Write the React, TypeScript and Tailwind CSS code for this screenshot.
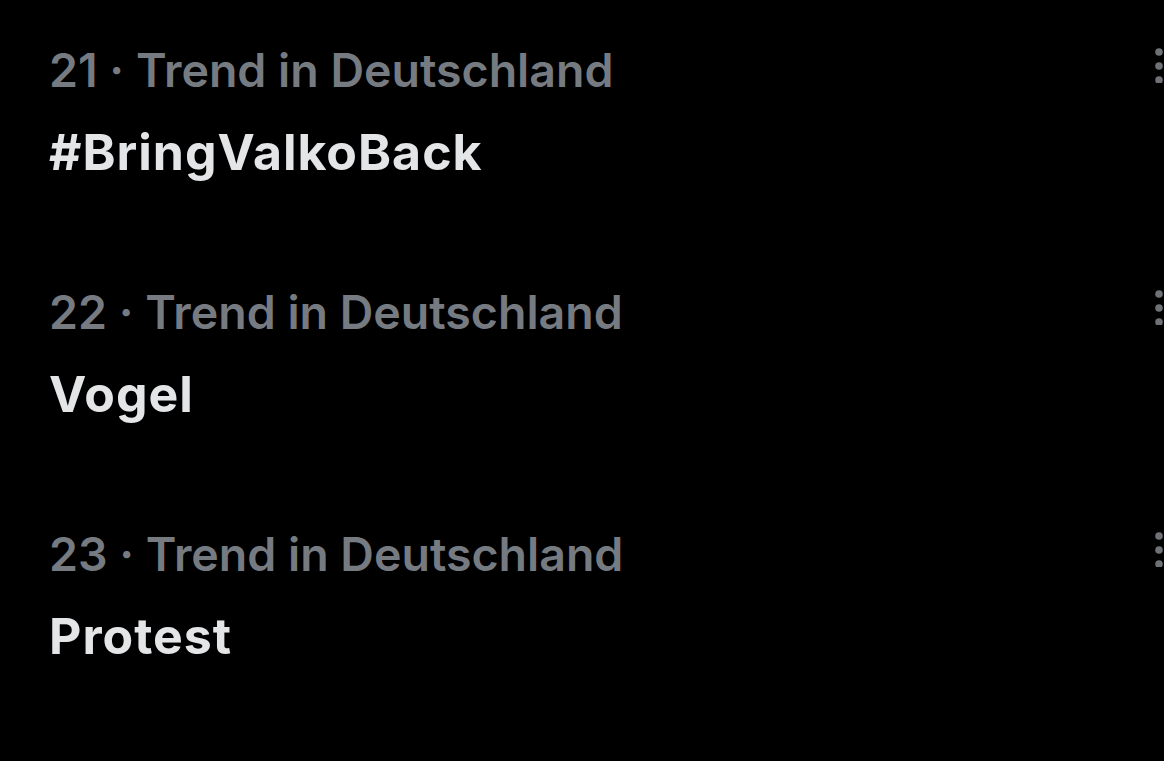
import React from 'react';

type Trend = {
    rank: number;
    place: string;
    topic: string;
};

const trends: Trend[] = [
    { rank: 21, place: 'Deutschland', topic: '#BringValkoBack' },
    { rank: 22, place: 'Deutschland', topic: 'Vogel' },
    { rank: 23, place: 'Deutschland', topic: 'Protest' },
];

const MoreDots = () => (
    <svg width="14" height="36" viewBox="0 0 14 36" className="shrink-0" aria-hidden="true">
        <circle cx="7" cy="5" r="3.8" fill="#6e7276" />
        <circle cx="7" cy="19" r="3.8" fill="#6e7276" />
        <circle cx="7" cy="33" r="3.8" fill="#6e7276" />
    </svg>
);

const TrendRow: React.FC<{ trend: Trend }> = ({ trend }) => (
    <div className="flex h-[242px] items-start justify-between pl-[49px] pt-[40px]">
        <div className="flex flex-col">
            <span className="text-[46.5px] font-semibold leading-[60px] text-[#767b82]">
                {trend.rank} · Trend in {trend.place}
            </span>
            <span className="mt-[22px] text-[50px] font-bold leading-[60px] tracking-[1px] text-[#e3e5e6]">
                {trend.topic}
            </span>
        </div>
        <div className="mr-[-2px] pt-[7px]">
            <MoreDots />
        </div>
    </div>
);

export default function App() {
    return (
        <div
            className="h-[761px] w-[1164px] overflow-hidden bg-black"
            style={{ fontFamily: 'Inter, "Noto Sans", sans-serif' }}
        >
            {trends.map((t) => (
                <TrendRow key={t.rank} trend={t} />
            ))}
        </div>
    );
}
